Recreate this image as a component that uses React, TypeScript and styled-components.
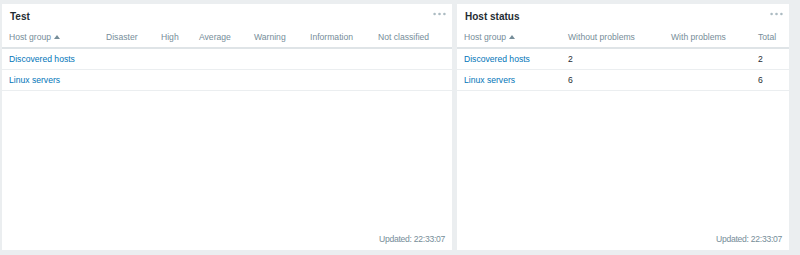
import React from "react";
import styled, { createGlobalStyle } from "styled-components";

const Global = createGlobalStyle`
  html, body { margin: 0; padding: 0; background: #ebeef0; }
  body { font-family: "Liberation Sans", Arial, sans-serif; }
`;

const Dashboard = styled.div`
  display: flex;
  gap: 5px;
  padding: 4px 0 0 2px;
`;

const Widget = styled.section<{ $w: number }>`
  width: ${(p) => p.$w}px;
  height: 246px;
  background: #ffffff;
  display: flex;
  flex-direction: column;
  box-sizing: border-box;
`;

const Header = styled.div`
  height: 23px;
  display: flex;
  align-items: center;
  justify-content: space-between;
  padding: 0 6px 0 8px;
  box-sizing: border-box;
`;

const Title = styled.h4`
  margin: 0;
  font-size: 10px;
  font-weight: bold;
  color: #1f2c33;
  line-height: 1;
  margin-top: 2px;
`;

const Dots = styled.svg`
  width: 13px;
  height: 4px;
  margin-top: -3px;
`;

const Table = styled.table`
  width: 100%;
  border-collapse: collapse;
  table-layout: fixed;
  font-size: 8.6px;
`;

const Th = styled.th`
  text-align: left;
  font-weight: normal;
  color: #768d99;
  height: 20px;
  padding: 0 0 0 7px;
  border-bottom: 2px solid #dfe4e7;
  white-space: nowrap;
  vertical-align: middle;
`;

const Td = styled.td`
  height: 20px;
  padding: 0 0 0 7px;
  border-bottom: 1px solid #ebeef0;
  color: #1f2c33;
  white-space: nowrap;
  vertical-align: middle;
`;

const Link = styled.a`
  color: #0275b8;
  text-decoration: none;
`;

const SortArrow = styled.span`
  display: inline-block;
  width: 0;
  height: 0;
  margin-left: 3px;
  vertical-align: 1px;
  border-left: 3px solid transparent;
  border-right: 3px solid transparent;
  border-bottom: 4px solid #768d99;
`;

const Footer = styled.div`
  margin-top: auto;
  text-align: right;
  font-size: 8.6px;
  letter-spacing: -0.28px;
  color: #768d99;
  padding: 0 7px 6px 0;
`;

const DotsIcon = () => (
  <Dots viewBox="0 0 13 4">
    <circle cx="1.6" cy="2" r="1.3" fill="#acbbc2" />
    <circle cx="6.5" cy="2" r="1.3" fill="#acbbc2" />
    <circle cx="11.4" cy="2" r="1.3" fill="#acbbc2" />
  </Dots>
);

const groups = ["Discovered hosts", "Linux servers"];

export default function App() {
  return (
    <>
      <Global />
      <Dashboard>
        <Widget $w={450}>
          <Header>
            <Title>Test</Title>
            <DotsIcon />
          </Header>
          <Table>
            <colgroup>
              {[97, 55, 38, 55, 56, 68, 81].map((w, i) => (
                <col key={i} style={{ width: w }} />
              ))}
            </colgroup>
            <thead>
              <tr>
                <Th>
                  Host group<SortArrow />
                </Th>
                <Th>Disaster</Th>
                <Th>High</Th>
                <Th>Average</Th>
                <Th>Warning</Th>
                <Th>Information</Th>
                <Th>Not classified</Th>
              </tr>
            </thead>
            <tbody>
              {groups.map((g) => (
                <tr key={g}>
                  <Td>
                    <Link href="#">{g}</Link>
                  </Td>
                  <Td />
                  <Td />
                  <Td />
                  <Td />
                  <Td />
                  <Td />
                </tr>
              ))}
            </tbody>
          </Table>
          <Footer>Updated: 22:33:07</Footer>
        </Widget>
        <Widget $w={332}>
          <Header>
            <Title>Host status</Title>
            <DotsIcon />
          </Header>
          <Table>
            <colgroup>
              {[104, 103, 87, 38].map((w, i) => (
                <col key={i} style={{ width: w }} />
              ))}
            </colgroup>
            <thead>
              <tr>
                <Th>
                  Host group<SortArrow />
                </Th>
                <Th>Without problems</Th>
                <Th>With problems</Th>
                <Th>Total</Th>
              </tr>
            </thead>
            <tbody>
              {[
                ["Discovered hosts", "2", "", "2"],
                ["Linux servers", "6", "", "6"],
              ].map((r) => (
                <tr key={r[0]}>
                  <Td>
                    <Link href="#">{r[0]}</Link>
                  </Td>
                  <Td>{r[1]}</Td>
                  <Td>{r[2]}</Td>
                  <Td>{r[3]}</Td>
                </tr>
              ))}
            </tbody>
          </Table>
          <Footer>Updated: 22:33:07</Footer>
        </Widget>
      </Dashboard>
    </>
  );
}
